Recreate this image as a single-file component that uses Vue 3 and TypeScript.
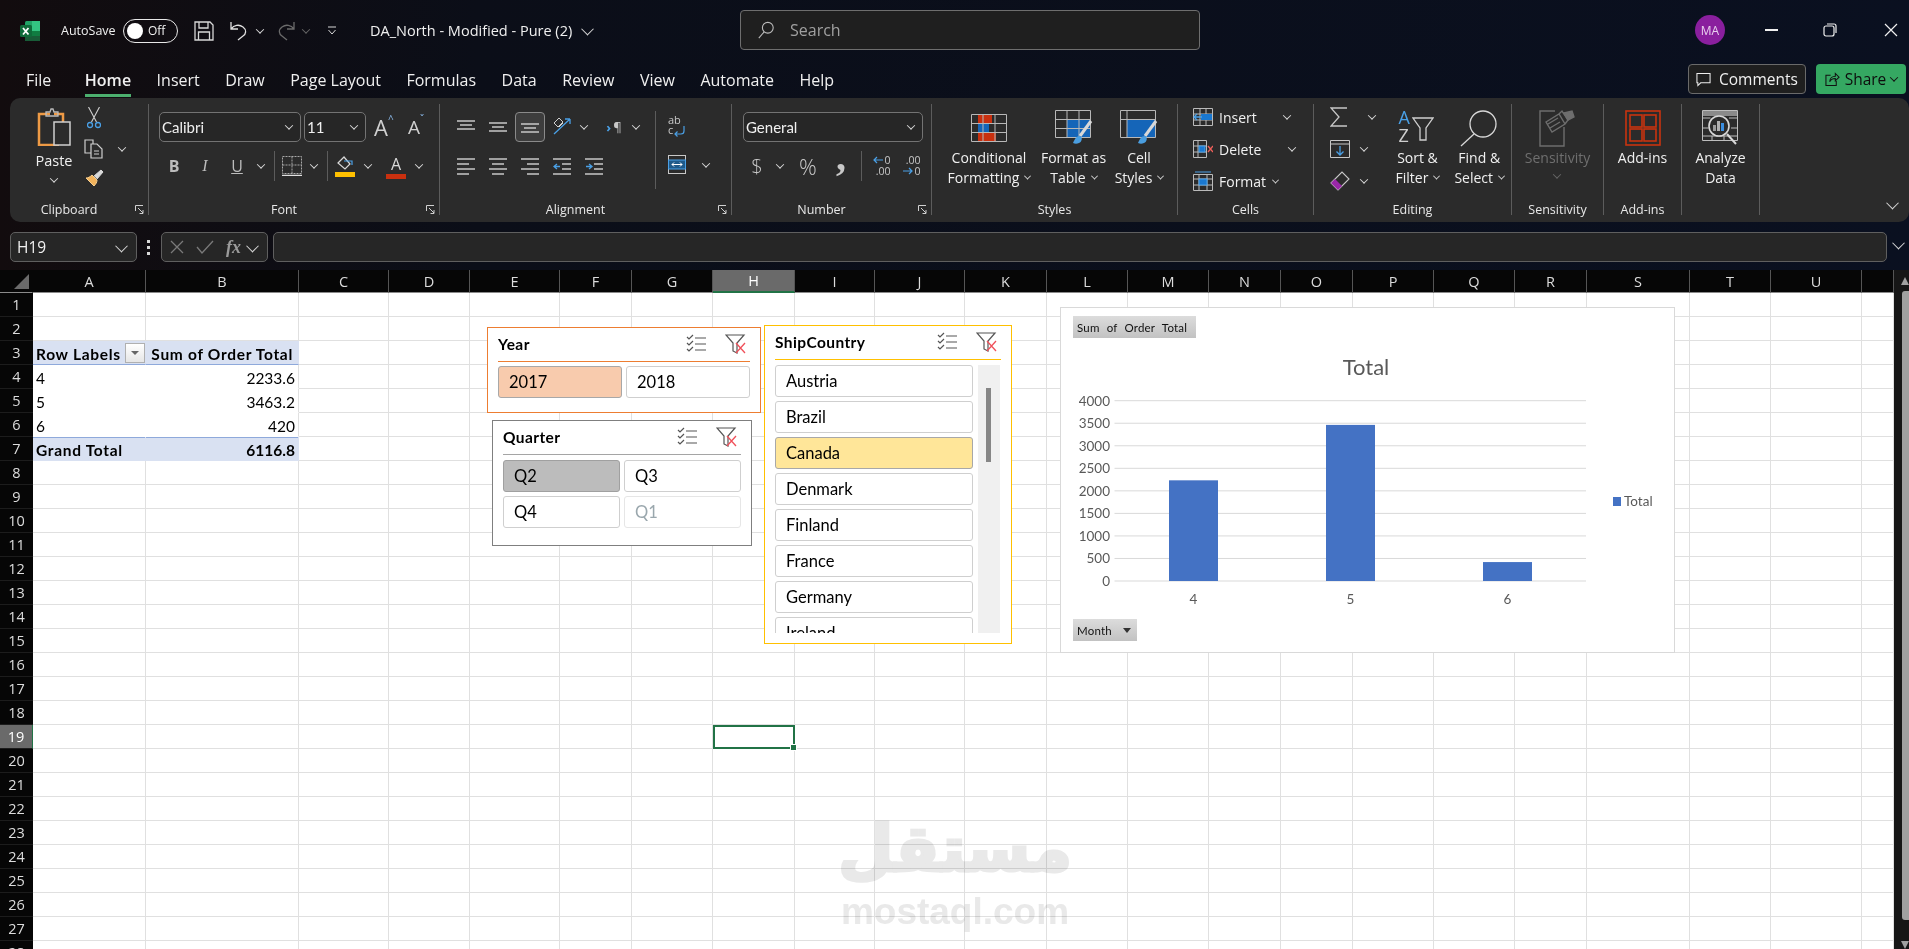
<template>
  <div class="app">
    <!-- title bar -->
    <header class="titlebar">
      <svg class="xl-logo" viewBox="0 0 20 20" width="20" height="20">
        <rect x="5" y="0" width="15" height="20" rx="1.5" fill="#21a366" />
        <rect x="12" y="0" width="8" height="10" fill="#33c481" />
        <rect x="5" y="10" width="15" height="5" fill="#107c41" />
        <rect x="5" y="15" width="15" height="5" fill="#185c37" />
        <rect x="0" y="4" width="12" height="12" rx="1.5" fill="#0f6a39" />
        <path d="M3 7l5.5 6.5M8.5 7L3 13.500" stroke="#fff" stroke-width="1.800" fill="none" />
      </svg>
      <span class="autosave">AutoSave</span>
      <span class="toggle"><i></i>Off</span>
      <svg class="qa save" viewBox="0 0 20 20" width="20" height="20" fill="none" stroke="#d8d8d8" stroke-width="1.300">
        <path d="M1 1h15l3 3v15H1zM5 1v6h9V1M4.500 19v-8h11v8" />
      </svg>
      <svg class="qa undo" viewBox="0 0 18 20" width="18" height="20" fill="none" stroke="#e0e0e0" stroke-width="1.300">
        <path d="M1 1v7h7M1 8c3-4 8-5 12-2 4 3 3 7 0 9l-5 4" />
      </svg>
      <i class="chev undo-chev"></i>
      <svg class="qa redo" viewBox="0 0 18 20" width="18" height="20" fill="none" stroke="#6b6b6b" stroke-width="1.300">
        <path d="M17 1v7h-7M17 8c-3-4-8-5-12-2-4 3-3 7 0 9l5 4" />
      </svg>
      <i class="chev dim redo-chev"></i>
      <svg class="qa custom" viewBox="0 0 10 10" width="10" height="10" fill="none" stroke="#d8d8d8" stroke-width="1">
        <path d="M1 1h8M1.500 4l3.500 4 3.500-4" />
      </svg>
      <span class="doc">DA_North - Modified - Pure (2)</span>
      <i class="chev big doc-chev"></i>
      <div class="search">
        <svg viewBox="0 0 20 20" width="18" height="20" fill="none" stroke="#bdbdbd" stroke-width="1.200">
          <circle cx="12" cy="7.500" r="6" />
          <path d="M8 12l-6 7" />
        </svg>
        <span>Search</span>
      </div>
      <div class="avatar">MA</div>
      <span class="win min"></span>
      <svg class="win-restore" viewBox="0 0 14 14" width="14" height="14" fill="none" stroke="#f0f0f0" stroke-width="1.200">
        <rect x="1" y="3" width="10" height="10" rx="2" />
        <path d="M4 1h7a2 2 0 0 1 2 2v7" />
      </svg>
      <svg class="win-close" viewBox="0 0 14 14" width="14" height="14" fill="none" stroke="#f0f0f0" stroke-width="1.200">
        <path d="M1 1l12 12M13 1L1 13" />
      </svg>
    </header>

    <!-- tabs -->
    <nav class="tabbar">
      <span v-for="t in tabs" :key="t" class="tab" :class="{ active: t === 'Home' }">{{ t }}</span>
      <div class="tab-actions">
        <button class="comments">
          <svg viewBox="0 0 16 16" width="15" height="15" fill="none" stroke="#eee" stroke-width="1.100">
            <path d="M1 1.500h14v10H5l-3 3v-3H1z" />
          </svg>
          Comments
        </button>
        <button class="share">
          <svg viewBox="0 0 16 16" width="15" height="16" fill="none" stroke="#111" stroke-width="1.100">
            <path d="M6 4H1v11h11v-5M5 11c0-4 3-6 6-6V2l4 4-4 4V7.500c-3 0-5 1-6 3.500z" />
          </svg>
          Share
          <i class="chev dark"></i>
        </button>
      </div>
    </nav>

    <!-- ribbon -->
    <section class="ribbon">
      <div class="group clipboard">
        <div class="body clip-body">
          <div class="paste">
            <svg viewBox="0 0 34 38" width="34" height="38" fill="none">
              <path d="M13 6H2v31h20" stroke="#ee9a45" stroke-width="2.500" />
              <path d="M17 6h9v8" stroke="#ee9a45" stroke-width="2.500" />
              <path d="M9 8V4h4l1-3 2 0 1 3h4v4z" stroke="#bdbdbd" stroke-width="1.300" />
              <rect x="17" y="14" width="16" height="23" stroke="#d0d0d0" stroke-width="1.500" fill="#2b2b2b" />
            </svg>
            <span class="paste-text">Paste</span>
            <i class="chev"></i>
          </div>
          <div class="clip-small">
            <svg viewBox="0 0 14 22" width="14" height="22" fill="none">
              <path d="M1.500 0l8 15M12.500 0l-8 15" stroke="#d0d0d0" stroke-width="1.100" />
              <circle cx="3" cy="18" r="2.500" stroke="#4aa0e6" stroke-width="1.300" />
              <circle cx="11" cy="18" r="2.500" stroke="#4aa0e6" stroke-width="1.300" />
            </svg>
            <div class="copy-row">
              <svg viewBox="0 0 20 20" width="20" height="20" fill="none" stroke="#cfcfcf" stroke-width="1.200">
                <path d="M7 14H1V1h8v4M7 5h6l5 5v9H7zM10 12h5M10 15h5" />
              </svg>
              <i class="chev"></i>
            </div>
            <svg viewBox="0 0 20 20" width="20" height="20" fill="none">
              <path d="M2 9l8 8c2-2 3-4 3-6l-5-5C6 8 4 9 2 9z" fill="#f2b35c" stroke="#f7cf8e" stroke-width="1" />
              <path d="M10 7l7-6 2 2-6 7" fill="#d9d9d9" stroke="#d9d9d9" />
            </svg>
          </div>
        </div>
        <div class="foot launch">Clipboard</div>
        <svg class="launcher" viewBox="0 0 9 10" width="9" height="10" fill="none" stroke="#d0d0d0">
          <path d="M.5 6V.5H8M3 3l5 5M8 5v3.500H4.500" />
        </svg>
      </div>

      <div class="group font">
        <div class="body">
          <div class="inputs">
            <div class="input font-name">Calibri<i class="chev"></i></div>
            <div class="input font-size">11<i class="chev"></i></div>
            <span class="grow">A<sup>^</sup></span>
            <span class="shrink">A<sup>ˇ</sup></span>
          </div>
          <div class="font-row">
            <b class="fmt">B</b>
            <em class="fmt serif">I</em>
            <u class="fmt">U</u>
            <i class="chev"></i>
            <span class="vsep"></span>
            <svg viewBox="0 0 20 20" width="20" height="20" fill="none" stroke="#a8a8a8" stroke-dasharray="2 1">
              <path d="M.5.500h19v17H.5zM10 .500v17M.5 9h19" />
              <path d="M0 19.500h20" stroke="#e0e0e0" stroke-width="1.500" stroke-dasharray="none" />
            </svg>
            <i class="chev"></i>
            <span class="vsep"></span>
            <svg viewBox="0 0 20 22" width="20" height="22" fill="none">
              <path d="M3 8l6-6 6 7-5 5z" stroke="#d8d8d8" stroke-width="1.200" />
              <path d="M9 6l8 0v4" stroke="#4aa0e6" stroke-width="1.200" />
              <rect x="0" y="17" width="20" height="5" fill="#ffc000" />
            </svg>
            <i class="chev"></i>
            <span class="color-a">A</span>
            <i class="chev"></i>
          </div>
        </div>
        <div class="foot launch">Font</div>
        <svg class="launcher" viewBox="0 0 9 10" width="9" height="10" fill="none" stroke="#d0d0d0">
          <path d="M.5 6V.5H8M3 3l5 5M8 5v3.500H4.500" />
        </svg>
      </div>

      <div class="group alignment">
        <div class="body align-body">
          <div class="align-left">
            <div class="align-row">
              <svg class="al" viewBox="0 0 18 14" width="18" height="14"><path d="M0 1h18M3 5h12M0 9h18" /></svg>
              <svg class="al" viewBox="0 0 18 14" width="18" height="14"><path d="M0 3h18M3 7h12M0 11h18" /></svg>
              <span class="al-on">
                <svg class="al" viewBox="0 0 18 14" width="18" height="14"><path d="M0 4h18M3 8h12M0 12h18" /></svg>
              </span>
              <svg viewBox="0 0 20 22" width="20" height="22" fill="none">
                <path d="M2 18L18 3M18 3h-5M18 3v5" stroke="#4aa0e6" stroke-width="1.300" />
                <path d="M2 7l5-5 4 4-5 5zM7 11l4-4" stroke="#d0d0d0" stroke-width="1" />
              </svg>
              <i class="chev"></i>
              <span class="para"><b>›</b>¶</span>
              <i class="chev para-chev"></i>
            </div>
            <div class="align-row second">
              <svg class="al" viewBox="0 0 18 18" width="18" height="18"><path d="M0 2h18M0 7h12M0 12h18M0 17h12" /></svg>
              <svg class="al" viewBox="0 0 18 18" width="18" height="18"><path d="M0 2h18M3 7h12M0 12h18M3 17h12" /></svg>
              <svg class="al" viewBox="0 0 18 18" width="18" height="18"><path d="M0 2h18M6 7h12M0 12h18M6 17h12" /></svg>
              <svg class="al" viewBox="0 0 18 18" width="18" height="18">
                <path d="M0 2h18M9 7h9M9 12h9M0 17h18" />
                <path class="blue" d="M7 9.500H1M4 7L1 9.500 4 12" />
              </svg>
              <svg class="al" viewBox="0 0 18 18" width="18" height="18">
                <path d="M0 2h18M9 7h9M9 12h9M0 17h18" />
                <path class="blue" d="M1 9.500h6M4 7l3 2.500L4 12" />
              </svg>
            </div>
          </div>
          <span class="vsep tall"></span>
          <div class="align-right">
            <div class="wrap-ic">
              <span>ab</span>
              <span class="wrap-c">c
                <svg viewBox="0 0 12 12" width="12" height="12" fill="none" stroke="#4aa0e6" stroke-width="1.200">
                  <path d="M11 1v5a3 3 0 0 1-3 3H2M4.500 6.500L2 9l2.500 2.500" />
                </svg>
              </span>
            </div>
            <div class="merge-row">
              <svg viewBox="0 0 18 19" width="18" height="19" fill="none" stroke="#c8c8c8">
                <rect x=".5" y=".5" width="17" height="18" />
                <rect x=".5" y="5" width="17" height="9" fill="#1f5a8a" stroke="#4aa0e6" />
                <path d="M4 9.500h10M6 7.500l-2 2 2 2M12 7.500l2 2-2 2" stroke="#fff" />
              </svg>
              <i class="chev"></i>
            </div>
          </div>
        </div>
        <div class="foot launch">Alignment</div>
        <svg class="launcher" viewBox="0 0 9 10" width="9" height="10" fill="none" stroke="#d0d0d0">
          <path d="M.5 6V.5H8M3 3l5 5M8 5v3.500H4.500" />
        </svg>
      </div>

      <div class="group number">
        <div class="body num-body">
          <div class="input num-format">General<i class="chev"></i></div>
          <div class="num-row">
            <span class="sym">$</span>
            <i class="chev"></i>
            <span class="sym pct">%</span>
            <b class="sym comma">,</b>
            <span class="vsep"></span>
            <span class="dec">
              <span>
                <svg viewBox="0 0 10 8" width="10" height="8" fill="none" stroke="#4aa0e6" stroke-width="1.200">
                  <path d="M10 4H1M4 1L1 4l3 3" />
                </svg>0
              </span>
              <span>.00</span>
            </span>
            <span class="dec">
              <span>.00</span>
              <span>
                <svg viewBox="0 0 10 8" width="10" height="8" fill="none" stroke="#4aa0e6" stroke-width="1.200">
                  <path d="M0 4h9M6 1l3 3-3 3" />
                </svg>0
              </span>
            </span>
          </div>
        </div>
        <div class="foot launch">Number</div>
        <svg class="launcher" viewBox="0 0 9 10" width="9" height="10" fill="none" stroke="#d0d0d0">
          <path d="M.5 6V.5H8M3 3l5 5M8 5v3.500H4.500" />
        </svg>
      </div>

      <div class="group styles">
        <div class="body large-row">
          <div class="large w-cond">
            <svg viewBox="0 0 36 28" width="36" height="28" fill="none">
              <rect x="7" y=".5" width="14" height="9" fill="#c9300f" />
              <rect x="7" y="10" width="11" height="8" fill="#1565b8" />
              <rect x="7" y="18.500" width="18" height="9" fill="#c9300f" />
              <path d="M.5.500h35v27H.5zM12 .5v27M24 .5v27M.5 9.500h35M.5 18.500h35" stroke="#b8b8b8" />
            </svg>
            <span>Conditional</span>
            <span>Formatting<i class="chev tiny"></i></span>
          </div>
          <div class="large w-fmt">
            <svg viewBox="0 0 38 36" width="38" height="36" fill="none">
              <rect x="12" y="10" width="23" height="18" fill="#1565b8" />
              <path d="M.5.500h35v27H.5zM12 .5v27M24 .5v27M.5 9.500h35M.5 18.500h35" stroke="#b8b8b8" />
              <path d="M36 11L25 26" stroke="#d8d8d8" stroke-width="3" />
              <path d="M18 33c2-4 3-7 7-7 3 1 2 6-1 7-2 1-4 1-6 0z" fill="#4a9ee0" />
            </svg>
            <span>Format as</span>
            <span>Table<i class="chev tiny"></i></span>
          </div>
          <div class="large w-cell">
            <svg viewBox="0 0 38 36" width="38" height="36" fill="none">
              <rect x="7" y="9" width="28" height="19" fill="#1565b8" />
              <path d="M.5.500h35v27H.5zM.5 9.500h35M7 .5v27" stroke="#b8b8b8" />
              <path d="M36 11L25 26" stroke="#d8d8d8" stroke-width="3" />
              <path d="M18 33c2-4 3-7 7-7 3 1 2 6-1 7-2 1-4 1-6 0z" fill="#4a9ee0" />
            </svg>
            <span>Cell</span>
            <span>Styles<i class="chev tiny"></i></span>
          </div>
        </div>
        <div class="foot">Styles</div>
      </div>

      <div class="group cells">
        <div class="body stack">
          <div class="stack-row">
            <svg viewBox="0 0 20 18" width="20" height="18" fill="none" stroke="#bbb">
              <path d="M.5.500h19v17H.5zM.5 6h19M.5 12h19M7 .5v17M13 .5v17" />
              <rect x="8" y="6" width="11" height="6" fill="#1a78d0" stroke="none" />
              <path d="M1 9h8M4 6L1 9l3 3" stroke="#4aa0e6" stroke-width="1.300" />
            </svg>
            <span>Insert</span><i class="chev c-ins"></i>
          </div>
          <div class="stack-row">
            <svg viewBox="0 0 20 18" width="20" height="18" fill="none" stroke="#bbb">
              <path d="M.5.500h13v17H.5zM.5 6h13M.5 12h13M5 .5v17" />
              <rect x="6" y="6" width="6" height="6" fill="#1a78d0" stroke="#4aa0e6" />
              <path d="M15 6l5 6M20 6l-5 6" stroke="#f0605a" stroke-width="1.300" />
            </svg>
            <span>Delete</span><i class="chev c-del"></i>
          </div>
          <div class="stack-row">
            <svg viewBox="0 0 20 20" width="20" height="20" fill="none" stroke="#bbb">
              <path d="M.5 3.500h19v16H.5zM.5 8h19M.5 14h19M6 3.500v16M14 3.500v16" />
              <rect x="6" y="8" width="8" height="6" fill="#1a78d0" stroke="#4aa0e6" />
              <path d="M2 1h16" stroke="#4aa0e6" />
            </svg>
            <span>Format</span><i class="chev tiny c-fmt"></i>
          </div>
        </div>
        <div class="foot">Cells</div>
      </div>

      <div class="group editing">
        <div class="body large-row">
          <div class="stack edit-stack">
            <div class="stack-row">
              <svg viewBox="0 0 18 20" width="18" height="20" fill="none" stroke="#c8c8c8" stroke-width="1.300">
                <path d="M17 1H1l8 9-8 9h16" />
              </svg>
              <i class="chev e-sum"></i>
            </div>
            <div class="stack-row">
              <svg viewBox="0 0 20 18" width="20" height="18" fill="none">
                <path d="M.5.500h19v17H.5zM.5 4h19" stroke="#c8c8c8" />
                <path d="M10 6v9M6.500 11.500L10 15l3.500-3.500" stroke="#4aa0e6" stroke-width="1.300" />
              </svg>
              <i class="chev e-fill"></i>
            </div>
            <div class="stack-row">
              <svg viewBox="0 0 20 20" width="20" height="20" fill="none">
                <path d="M1 12L12 1l7 7L8 19z" stroke="#c8c8c8" stroke-width="1.100" />
                <path d="M1 12l4-4 7 7-4 4z" fill="#9a27a8" />
              </svg>
              <i class="chev e-fill"></i>
            </div>
          </div>
          <div class="large w-sort">
            <div class="sort-ic">
              <span class="az"><b>A</b><span>Z</span></span>
              <svg viewBox="0 0 22 24" width="22" height="24" fill="none">
                <path d="M1 1h20l-7 10v12H8V11z" stroke="#cfcfcf" stroke-width="1.300" />
              </svg>
            </div>
            <span>Sort &amp;</span>
            <span>Filter<i class="chev tiny"></i></span>
          </div>
          <div class="large w-find">
            <svg viewBox="0 0 38 36" width="38" height="36" fill="none" stroke="#d8d8d8" stroke-width="1.300">
              <circle cx="23" cy="14" r="13" />
              <path d="M14 24L1 36" />
            </svg>
            <span>Find &amp;</span>
            <span>Select<i class="chev tiny"></i></span>
          </div>
        </div>
        <div class="foot">Editing</div>
      </div>

      <div class="group sens">
        <div class="body large-row center">
          <div class="large off">
            <svg viewBox="0 0 36 36" width="36" height="36" fill="none" stroke="#6e6e6e" stroke-width="1.400">
              <path d="M16 1H1v35h24V17" />
              <path d="M7 12L20 4l6 10-13 8zM20 4l3-3 6 9-3 4M9 14l10-6M11 18l10-6" />
              <path d="M25 3l8-2 2 6-6 3z" fill="#6e6e6e" />
            </svg>
            <span>Sensitivity</span>
            <i class="chev dim"></i>
          </div>
        </div>
        <div class="foot">Sensitivity</div>
      </div>

      <div class="group addins">
        <div class="body large-row center">
          <div class="large">
            <svg viewBox="0 0 36 36" width="36" height="36" fill="none" stroke="#c9340f" stroke-width="1.600">
              <rect x="1" y="1" width="34" height="34" />
              <rect x="5" y="5" width="12" height="12" />
              <rect x="19" y="5" width="12" height="12" />
              <rect x="5" y="19" width="12" height="12" />
              <rect x="19" y="19" width="12" height="12" />
            </svg>
            <span>Add-ins</span>
          </div>
        </div>
        <div class="foot">Add-ins</div>
      </div>

      <div class="group analyze">
        <div class="body large-row center">
          <div class="large">
            <svg viewBox="0 0 36 36" width="36" height="36" fill="none" stroke="#bdbdbd">
              <path d="M.5.500h35v30H.5zM.5 8h8M27 8h8M.5 18h6M29 18h6M.5 26h35M10 26v5M22 26v5" />
              <rect x="1" y="1" width="34" height="5" fill="#8a8a8a" stroke="none" />
              <circle cx="17" cy="16" r="10" stroke="#d8d8d8" stroke-width="1.600" fill="#2b2b2b" />
              <path d="M25 24l9 10" stroke="#d8d8d8" stroke-width="2" />
              <rect x="11" y="15" width="3" height="6" fill="#9a9a9a" stroke="none" />
              <rect x="15" y="11" width="3" height="10" fill="#b0b0b0" stroke="none" />
              <rect x="19" y="13" width="3" height="8" fill="#3a8ee0" stroke="none" />
            </svg>
            <span>Analyze</span>
            <span>Data</span>
          </div>
        </div>
        <div class="foot"></div>
      </div>
      <i class="chev big ribbon-collapse"></i>
    </section>

    <!-- formula bar -->
    <div class="formula">
      <div class="namebox">H19<i class="chev big"></i></div>
      <span class="dots"><i></i><i></i><i></i></span>
      <div class="fx">
        <svg viewBox="0 0 14 14" width="14" height="14" fill="none" stroke="#7a7a7a" stroke-width="1.300">
          <path d="M1 1l12 12M13 1L1 13" />
        </svg>
        <svg viewBox="0 0 18 14" width="18" height="14" fill="none" stroke="#7a7a7a" stroke-width="1.300">
          <path d="M1 7l5 6L17 1" />
        </svg>
        <em>fx</em>
        <i class="chev big"></i>
      </div>
      <div class="fbar"></div>
      <i class="chev big f-chev"></i>
    </div>

    <!-- sheet -->
    <div class="sheet">
      <div class="grid" :style="{ gridTemplateColumns: gridCols }">
        <div class="corner"><span></span></div>
        <div
          v-for="c in cols"
          :key="c.name"
          class="col-head"
          :class="{ sel: c.name === 'H' }"
        >{{ c.name === 'V' ? '' : c.name }}</div>
        <template v-for="r in rows" :key="r">
          <div class="row-head" :class="{ sel: r === 19 }">{{ r }}</div>
          <div
            v-for="c in cols"
            :key="c.name + r"
            class="cell"
            :class="cellClass(c.name, r)"
          >
            <span>{{ cells[c.name + r]?.text }}</span>
            <span v-if="c.name + r === 'A3'" class="pv-filter"><i></i></span>
          </div>
        </template>

        <div class="selection"><i></i></div>

        <div
          v-for="s in slicers"
          :key="s.title"
          class="slicer"
          :class="s.cls"
        >
          <div class="sl-head">
            <b>{{ s.title }}</b>
            <svg viewBox="0 0 20 19" width="20" height="19" fill="none" stroke="#555" stroke-width="1.200">
              <path d="M1 3l2 2 4-4M1 9l2 2 4-4M1 15l2 2 4-4M9 4h11M9 10h11M9 16h11" />
            </svg>
            <svg viewBox="0 0 21 20" width="21" height="20" fill="none">
              <path d="M1 1h18l-7 8v10l-4-2V9z" stroke="#555" stroke-width="1.200" />
              <path d="M11 9l9 10M20 9l-9 10" stroke="#f0505a" stroke-width="1.300" />
            </svg>
          </div>
          <div class="sl-body">
            <div class="sl-items">
              <div
                v-for="it in s.items"
                :key="it"
                class="sl-item"
                :class="{ on: it === s.selected, off: s.dimmed === it }"
              >{{ it }}</div>
            </div>
            <div v-if="s.scroll" class="sl-track"><i></i></div>
          </div>
        </div>

        <div class="chart">
          <svg viewBox="0 0 614 345" width="614" height="345">
            <text x="306" y="68" class="c-title" text-anchor="middle">Total</text>
            <g v-for="v in ticks" :key="v">
              <line x1="54.500" x2="526" :y1="tickY(v)" :y2="tickY(v)" stroke="#d9d9d9" />
              <text x="50" :y="tickY(v) + 5" class="c-axis" text-anchor="end">{{ v }}</text>
            </g>
            <g v-for="b in bars" :key="b.label">
              <rect :x="b.x" :y="tickY(b.value)" width="49" :height="tickY(0) - tickY(b.value)" fill="#4472c4" />
              <text :x="b.x + 24.500" y="297" class="c-axis" text-anchor="middle">{{ b.label }}</text>
            </g>
            <rect x="553" y="190" width="8" height="9" fill="#4472c4" />
            <text x="564" y="199" class="c-axis">Total</text>
          </svg>
          <span class="field sum">Sum of Order Total</span>
          <span class="field month">Month<i></i></span>
        </div>

        <div class="watermark">
          <span class="wm-ar">مستقل</span>
          <span class="wm-en">mostaql.com</span>
        </div>
      </div>
      <div class="vscroll">
        <i class="up"></i>
        <i class="thumb"></i>
        <i class="down"></i>
      </div>
    </div>
  </div>
</template>

<script setup lang="ts">
interface Cell {
  text: string
  cls?: string
}

const tabs = ['File', 'Home', 'Insert', 'Draw', 'Page Layout', 'Formulas', 'Data', 'Review', 'View', 'Automate', 'Help']

const widths: Record<string, number> = {
  A: 113, B: 153, C: 90, D: 81, E: 90, F: 72, G: 81, H: 82, I: 80, J: 90, K: 82,
  L: 81, M: 81, N: 72, O: 72, P: 81, Q: 81, R: 72, S: 103, T: 81, U: 91, V: 32,
}
const cols = Object.keys(widths).map((name) => ({ name, width: widths[name] }))
const rows = Array.from({ length: 28 }, (_, i) => i + 1)
const gridCols = '33px ' + cols.map((c) => c.width + 'px').join(' ')

const cells: Record<string, Cell> = {
  A3: { text: 'Row Labels', cls: 'pv-head' },
  B3: { text: 'Sum of Order Total', cls: 'pv-head right' },
  A4: { text: '4', cls: 'pv' },
  B4: { text: '2233.6', cls: 'pv right' },
  A5: { text: '5', cls: 'pv' },
  B5: { text: '3463.2', cls: 'pv right' },
  A6: { text: '6', cls: 'pv' },
  B6: { text: '420', cls: 'pv right' },
  A7: { text: 'Grand Total', cls: 'pv-total' },
  B7: { text: '6116.8', cls: 'pv-total right' },
}

function cellClass(col: string, row: number) {
  return cells[col + row]?.cls ?? ''
}

const slicers = [
  { title: 'Year', cls: 'year', items: ['2017', '2018'], selected: '2017' },
  { title: 'Quarter', cls: 'quarter', items: ['Q2', 'Q3', 'Q4', 'Q1'], selected: 'Q2', dimmed: 'Q1' },
  {
    title: 'ShipCountry',
    cls: 'ship',
    items: ['Austria', 'Brazil', 'Canada', 'Denmark', 'Finland', 'France', 'Germany', 'Ireland'],
    selected: 'Canada',
    scroll: true,
  },
]

const ticks = [0, 500, 1000, 1500, 2000, 2500, 3000, 3500, 4000]
const tickY = (v: number) => 274 - (v / 4000) * 180.3
const bars = [
  { label: '4', value: 2233.6, x: 109 },
  { label: '5', value: 3463.2, x: 266 },
  { label: '6', value: 420, x: 423 },
]
</script>

<style>
html,
body {
  margin: 0;
  background: #0a0f1b;
}
</style>

<style scoped>
.app {
  width: 1909px;
  height: 949px;
  overflow: hidden;
  position: relative;
  background: linear-gradient(90deg, #120c0e 0%, #0b0e18 25%, #0a1020 100%);
  color: #f0f0f0;
  font-family: "Open Sans", "Noto Sans", sans-serif;
}
.chev {
  display: inline-block;
  width: 5px;
  height: 5px;
  border-right: 1.5px solid #d8d8d8;
  border-bottom: 1.5px solid #d8d8d8;
  transform: rotate(45deg) translate(-1px, -1px);
  flex: none;
}
.chev.big {
  width: 8px;
  height: 8px;
  border-width: 1.2px;
}
.chev.tiny {
  width: 4px;
  height: 4px;
  margin-left: 6px;
  border-width: 1.2px;
  vertical-align: 3px;
}
.chev.dim {
  border-color: #666;
}
.chev.dark {
  border-color: #111;
}

/* title bar */
.titlebar {
  height: 49px;
  display: flex;
  align-items: center;
  padding: 12px 0 0 20px;
  box-sizing: border-box;
  font-size: 13px;
}
.autosave {
  margin-left: 21px;
  width: 62px;
  font-size: 12.500px;
}
.toggle {
  width: 55px;
  height: 24px;
  box-sizing: border-box;
  border: 1px solid #e8e8e8;
  border-radius: 12px;
  display: flex;
  align-items: center;
  font-size: 12px;
  gap: 5px;
  padding-left: 3px;
}
.toggle i {
  width: 16px;
  height: 16px;
  border-radius: 50%;
  background: #fff;
}
.qa.save {
  margin-left: 16px;
}
.qa.undo {
  margin-left: 16px;
}
.undo-chev {
  margin-left: 9px;
}
.qa.redo {
  margin-left: 14px;
}
.redo-chev {
  margin-left: 8px;
}
.qa.custom {
  margin-left: 18px;
}
.doc {
  margin-left: 33px;
  font-size: 14.500px;
  width: 207px;
  white-space: nowrap;
}
.doc-chev {
  margin-left: 6px;
}
.search {
  position: absolute;
  left: 740px;
  top: 10px;
  width: 460px;
  height: 40px;
  box-sizing: border-box;
  background: #1f1f1f;
  border: 1px solid #6e6e6e;
  border-radius: 4px;
  display: flex;
  align-items: center;
  gap: 15px;
  padding-left: 16px;
  font-size: 16px;
  color: #a0a0a0;
}
.avatar {
  position: absolute;
  left: 1695px;
  top: 15px;
  width: 30px;
  height: 30px;
  border-radius: 50%;
  background: #8a1f9e;
  display: flex;
  align-items: center;
  justify-content: center;
  font-size: 12px;
  color: #e8d0ee;
}
.win.min {
  position: absolute;
  left: 1765px;
  top: 29px;
  width: 13px;
  height: 1.500px;
  background: #f0f0f0;
}
.win-restore {
  position: absolute;
  left: 1823px;
  top: 23px;
}
.win-close {
  position: absolute;
  left: 1884px;
  top: 23px;
}

/* tabs */
.tabbar {
  height: 49px;
  display: flex;
  align-items: center;
  gap: 25.500px;
  padding: 13px 0 0 26px;
  box-sizing: border-box;
  font-size: 16px;
}
.tab {
  position: relative;
  white-space: nowrap;
}
.tab.active {
  font-weight: 600;
  margin-left: 8px;
}
.tab.active::after {
  content: "";
  position: absolute;
  left: 0;
  right: 0;
  top: 25px;
  height: 3px;
  background: #4caf6e;
}
.tab-actions {
  position: absolute;
  right: 3px;
  top: 64px;
  display: flex;
  gap: 10px;
}
.comments,
.share {
  height: 30px;
  box-sizing: border-box;
  border-radius: 4px;
  display: flex;
  align-items: center;
  font: inherit;
  font-size: 15.500px;
  padding: 0;
}
.comments {
  width: 118px;
  gap: 8px;
  justify-content: center;
  background: #1f1f1f;
  border: 1px solid #6a6a6a;
  color: #f0f0f0;
}
.share {
  width: 90px;
  gap: 5px;
  justify-content: center;
  background: #35a862;
  border: none;
  color: #0d0d0d;
}

/* ribbon */
.ribbon {
  position: relative;
  margin-left: 10px;
  width: 1899px;
  height: 124px;
  box-sizing: border-box;
  padding-top: 6px;
  background: #2b2b2b;
  border-radius: 10px;
  display: flex;
  font-size: 14px;
  color: #f0f0f0;
}
.group {
  position: relative;
  height: 111px;
  box-sizing: border-box;
  border-right: 1px solid #5c5c5c;
  flex: none;
}
.clipboard { width: 139px; }
.font { width: 291px; }
.alignment { width: 292px; }
.number { width: 200px; }
.styles { width: 246px; }
.cells { width: 136px; }
.editing { width: 198px; }
.sens { width: 92px; }
.addins { width: 78px; }
.analyze { width: 78px; }
.body {
  height: 98px;
  box-sizing: border-box;
}
.foot {
  height: 13px;
  line-height: 16px;
  text-align: center;
  font-size: 12.500px;
  color: #e8e8e8;
}
.foot.launch {
  padding-right: 20px;
}
.launcher {
  position: absolute;
  right: 4px;
  bottom: 0;
}
.vsep {
  display: block;
  width: 1px;
  height: 30px;
  background: #5c5c5c;
}

/* clipboard */
.clip-body {
  display: flex;
  padding: 4px 0 0 27px;
}
.paste {
  width: 34px;
  display: flex;
  flex-direction: column;
  align-items: center;
}
.paste-text {
  margin-top: 6px;
  line-height: 18px;
  font-size: 14.500px;
}
.paste .chev {
  margin-top: 7px;
}
.clip-small {
  margin-left: 13px;
  display: flex;
  flex-direction: column;
  gap: 10px;
  align-items: flex-start;
}
.clip-small > svg:first-child {
  margin-left: 3px;
  margin-top: -1px;
}
.copy-row {
  display: flex;
  align-items: center;
  gap: 15px;
}

/* font group */
.inputs {
  display: flex;
  align-items: center;
  padding: 8px 0 0 10px;
}
.input {
  height: 30px;
  box-sizing: border-box;
  border: 1px solid #737373;
  border-radius: 5px;
  background: #262626;
  display: flex;
  align-items: center;
  justify-content: space-between;
  padding: 0 8px 0 2px;
  font-family: "Lato", "Open Sans", sans-serif;
  font-size: 15px;
}
.font-name { width: 142px; }
.font-size { width: 62px; margin-left: 3px; }
.grow,
.shrink {
  font-size: 22px;
  line-height: 30px;
  color: #d0d0d0;
  display: flex;
}
.grow { margin-left: 8px; width: 34px; }
.shrink { font-size: 19px; }
.grow sup,
.shrink sup {
  font-size: 10px;
  line-height: 14px;
  color: #8ab8e8;
}
.font-row {
  display: grid;
  grid-template-columns: 30px 32px 32px 16px 10px 26px 18px 9px 26px 20px 36px 10px;
  justify-items: center;
  align-items: center;
  margin: 9px 0 0 10px;
  height: 30px;
}
.fmt {
  font-size: 16px;
  color: #bcbcbc;
}
.serif {
  font-family: "Liberation Serif", serif;
}
.color-a {
  font-size: 16px;
  line-height: 20px;
  width: 20px;
  text-align: center;
  color: #d8d8d8;
  border-bottom: 5px solid #c9300f;
}

/* alignment */
.align-body {
  display: flex;
}
.al {
  fill: none;
  stroke: #c8c8c8;
  stroke-width: 1.300;
}
.al .blue {
  stroke: #4aa0e6;
}
.align-left {
  width: 215px;
  padding-top: 8px;
}
.align-row {
  display: grid;
  grid-template-columns: 32px 32px 32px 32px 11px 50px 16px;
  justify-items: center;
  align-items: center;
  margin-left: 10px;
  height: 30px;
}
.para-chev {
  justify-self: start;
  margin-left: -6px;
}
.align-row.second {
  grid-template-columns: 32px 32px 32px 32px 32px;
  margin-top: 9px;
}
.al-on {
  width: 30px;
  height: 30px;
  box-sizing: border-box;
  border: 1px solid #8a8a8a;
  border-radius: 4px;
  background: #3d3d3d;
  display: flex;
  align-items: center;
  justify-content: center;
}
.para {
  font-size: 13px;
  color: #c8c8c8;
}
.para b {
  color: #4aa0e6;
  margin-right: 2px;
}
.vsep.tall {
  height: 78px;
  margin-top: 7px;
}
.align-right {
  padding: 11px 0 0 12px;
  display: flex;
  flex-direction: column;
  gap: 18px;
}
.wrap-ic {
  width: 22px;
  height: 22px;
  display: flex;
  flex-direction: column;
  font-size: 11px;
  line-height: 10px;
  color: #c8c8c8;
}
.wrap-c {
  display: flex;
  align-items: flex-start;
  gap: 0;
}
.merge-row {
  display: flex;
  align-items: center;
  gap: 17px;
}

/* number */
.num-body {
  padding-top: 8px;
}
.num-format {
  width: 180px;
  margin-left: 11px;
}
.num-row {
  display: grid;
  grid-template-columns: 28px 18px 38px 28px 12px 30px 30px;
  justify-items: center;
  align-items: center;
  margin: 9px 0 0 11px;
  height: 30px;
}
.sym {
  font-size: 20px;
  color: #c8c8c8;
  font-weight: 300;
}
.pct {
  font-size: 22px;
}
.comma {
  font-family: "Liberation Serif", serif;
  font-weight: 700;
  font-size: 40px;
  line-height: 14px;
  margin-top: -18px;
}
.dec {
  display: flex;
  flex-direction: column;
  align-items: flex-end;
  font-size: 10.500px;
  line-height: 11px;
  color: #c8c8c8;
}
.dec svg {
  margin-right: 1px;
}

/* large buttons */
.large-row {
  display: flex;
  padding-top: 4px;
}
.styles .large-row {
  padding-left: 8px;
}
.large-row.center {
  justify-content: center;
}
.large {
  display: flex;
  flex-direction: column;
  align-items: center;
  line-height: 20px;
  white-space: nowrap;
}
.large > svg {
  height: 40px;
  flex: none;
  align-self: center;
}
.off {
  color: #6f6f6f;
}
.off .chev {
  margin-top: 5px;
}
.w-cond { width: 98px; }
.w-fmt { width: 71px; }
.w-cell { width: 60px; }
.w-sort { width: 44px; margin-left: 4px; }
.w-find { width: 64px; margin-left: 8px; }

/* stacks in Cells and Editing */
.stack {
  display: flex;
  flex-direction: column;
}
.cells .stack {
  margin: -3px 0 3px;
  padding-left: 15px;
}
.stack-row {
  height: 32px;
  display: flex;
  align-items: center;
  gap: 6px;
}
.c-ins { margin-left: 21px; }
.c-del { margin-left: 22px; }
.chev.c-fmt { margin-left: 1px; }
.editing .large-row {
  padding-left: 16px;
}
.edit-stack {
  width: 62px;
  margin-top: -7px;
}
.e-sum { margin-left: 15px; }
.e-fill { margin-left: 5px; }
.sort-ic {
  width: 38px;
  height: 40px;
  display: flex;
  align-items: flex-start;
  gap: 2px;
}
.az {
  display: flex;
  flex-direction: column;
  font-size: 18px;
  line-height: 18px;
  color: #cfcfcf;
}
.az b {
  font-weight: 400;
  color: #4aa0e6;
}
.sort-ic svg {
  margin-top: 9px;
}
.ribbon-collapse {
  position: absolute;
  left: 1878px;
  top: 102px;
}

/* formula bar */
.formula {
  display: flex;
  align-items: center;
  height: 30px;
  margin-top: 10px;
  padding-left: 10px;
  position: relative;
}
.namebox {
  width: 127px;
  height: 30px;
  box-sizing: border-box;
  background: #262626;
  border: 1px solid #5f5f5f;
  border-radius: 5px;
  display: flex;
  align-items: center;
  justify-content: space-between;
  padding: 0 10px 0 6px;
  font-size: 15.500px;
}
.dots {
  display: flex;
  flex-direction: column;
  gap: 3px;
  margin-left: 10px;
}
.dots i {
  width: 3px;
  height: 3px;
  background: #d8d8d8;
}
.fx {
  margin-left: 11px;
  width: 107px;
  height: 30px;
  box-sizing: border-box;
  background: #262626;
  border: 1px solid #5f5f5f;
  border-radius: 5px;
  display: flex;
  align-items: center;
  padding-left: 8px;
  gap: 12px;
}
.fx em {
  font-family: "Liberation Serif", serif;
  font-weight: 700;
  font-size: 18px;
  color: #9a9a9a;
  margin-right: -5px;
}
.fbar {
  margin-left: 5px;
  width: 1614px;
  height: 30px;
  box-sizing: border-box;
  background: #262626;
  border: 1px solid #5f5f5f;
  border-radius: 5px;
}
.f-chev {
  position: absolute;
  left: 1894px;
  top: 8px;
}

/* sheet */
.sheet {
  position: absolute;
  left: 0;
  top: 270px;
  right: 0;
  bottom: 0;
  display: flex;
  overflow: hidden;
}
.grid {
  position: relative;
  width: 1894px;
  display: grid;
  grid-template-rows: 23px repeat(28, 24px);
  background: #fff;
  align-content: start;
}
.corner {
  background: #060606;
  border-right: 1px solid #060606;
  border-bottom: 1px solid #8a8a8a;
  display: flex;
  align-items: flex-end;
  justify-content: flex-end;
  padding: 0 3px 3px 0;
}
.corner span {
  width: 15px;
  height: 15px;
  background: #6a6a6a;
  clip-path: polygon(100% 0, 100% 100%, 0 100%);
}
.col-head,
.row-head {
  background: #060606;
  color: #dcdcdc;
  font-size: 14.500px;
  display: flex;
  align-items: center;
  justify-content: center;
  box-sizing: border-box;
}
.col-head {
  border-right: 1px solid #555;
  border-bottom: 1px solid #8a8a8a;
}
.col-head.sel,
.row-head.sel {
  background: #6a6a6a;
  color: #fff;
}
.col-head.sel {
  border-bottom: 2px solid #217346;
}
.row-head {
  border-bottom: 1px solid #1c1c1c;
}
.row-head.sel {
  border-right: 1px solid #217346;
}
.cell {
  box-sizing: border-box;
  border-right: 1px solid #e0e0e0;
  border-bottom: 1px solid #e0e0e0;
  color: #000;
  font-family: "Lato", "Carlito", sans-serif;
  font-size: 15.500px;
  display: flex;
  align-items: center;
  justify-content: space-between;
  padding: 2px 3px 0 3px;
  white-space: nowrap;
}
.cell.right {
  justify-content: flex-end;
}
.pv {
  border-bottom-color: transparent;
}
.pv:not(.right) {
  border-right-color: transparent;
}
.pv-head,
.pv-total {
  background: #d9e1f2;
  font-weight: 700;
  letter-spacing: 0.7px;
  border-right-color: #d9e1f2;
}
.pv-total.right {
  letter-spacing: 0;
}
.pv-head.right {
  padding-right: 5px;
}
.pv-head {
  border-bottom: 1px solid #8ea9db;
}
.pv-total {
  box-shadow: inset 0 1px 0 #8ea9db;
  border-bottom-color: #d9e1f2;
}
.pv-filter {
  width: 20px;
  height: 20px;
  box-sizing: border-box;
  border: 1px solid #b0b0b0;
  background: linear-gradient(#fff, #e6e6e6);
  display: flex;
  align-items: center;
  justify-content: center;
  margin: -2px -3px 0 0;
}
.pv-filter i {
  border-left: 4px solid transparent;
  border-right: 4px solid transparent;
  border-top: 4px solid #666;
}
.selection {
  position: absolute;
  left: 713px;
  top: 455px;
  width: 82px;
  height: 24px;
  box-sizing: border-box;
  border: 2px solid #217346;
}
.selection i {
  position: absolute;
  right: -4px;
  bottom: -4px;
  width: 5px;
  height: 5px;
  background: #217346;
  border: 1px solid #fff;
}

/* slicers */
.slicer {
  position: absolute;
  box-sizing: border-box;
  background: #fff;
  padding: 0 10px;
  color: #000;
  font-family: "Lato", "Carlito", sans-serif;
}
.sl-head {
  display: flex;
  align-items: center;
  gap: 19px;
  height: 34px;
  box-sizing: border-box;
  padding: 0 4px 2px 0;
  border-bottom: 1px solid;
  margin-bottom: 4px;
}
.sl-head b {
  flex: 1;
  font-size: 15.500px;
  letter-spacing: 0.4px;
}
.sl-items {
  display: grid;
  grid-template-columns: 1fr 1fr;
  gap: 4px;
}
.sl-item {
  height: 32px;
  box-sizing: border-box;
  border: 1px solid #cfcfcf;
  border-radius: 3px;
  display: flex;
  align-items: center;
  padding-left: 10px;
  font-size: 16.500px;
}
.sl-item.off {
  color: #9aa7ad;
  border-color: #e6e6e6;
}
.year {
  left: 487px;
  top: 57px;
  width: 274px;
  height: 86px;
  border: 1px solid #ed7d31;
}
.year .sl-head {
  border-color: #ed7d31;
}
.year .sl-item.on {
  background: #f8cbad;
  border-color: #a8a8a8;
}
.quarter {
  left: 492px;
  top: 150px;
  width: 260px;
  height: 126px;
  border: 1px solid #7f7f7f;
}
.quarter .sl-head {
  border-color: #a5a5a5;
  margin-bottom: 5px;
}
.quarter .sl-item.on {
  background: #bcbcbc;
  border-color: #a0a0a0;
}
.ship {
  left: 764px;
  top: 55px;
  width: 248px;
  height: 319px;
  border: 1px solid #ffc000;
}
.ship .sl-head {
  border-color: #ffc000;
  margin-bottom: 5px;
}
.ship .sl-body {
  display: flex;
  height: 268px;
  overflow: hidden;
}
.ship .sl-items {
  width: 198px;
  flex: none;
  grid-template-columns: 1fr;
  align-content: start;
}
.ship .sl-item.on {
  background: #ffe699;
  border-color: #a8a8a8;
}
.sl-track {
  margin-left: 5px;
  width: 22px;
  background: #f0f0f0;
  padding-top: 23px;
  box-sizing: border-box;
}
.sl-track i {
  display: block;
  margin-left: 8px;
  width: 5px;
  height: 74px;
  background: #868686;
}

/* chart */
.chart {
  position: absolute;
  left: 1060px;
  top: 37px;
  width: 615px;
  height: 346px;
  box-sizing: border-box;
  background: #fff;
  border: 1px solid #d9d9d9;
  font-family: "Lato", "Carlito", sans-serif;
}
.chart svg {
  display: block;
  margin: -1px 0 0 -1px;
}
.c-title {
  font-size: 22px;
  fill: #595959;
}
.c-axis {
  font-size: 13.500px;
  fill: #595959;
}
.field {
  position: absolute;
  left: 12px;
  height: 22px;
  box-sizing: border-box;
  padding-left: 4px;
  background: linear-gradient(#dcdcdc, #c2c2c2);
  color: #111;
  font-size: 11.500px;
  display: flex;
  align-items: center;
  white-space: nowrap;
  letter-spacing: 0.2px;
}
.sum {
  top: 8px;
  width: 123px;
  word-spacing: 4px;
}
.month {
  top: 311px;
  width: 64px;
}
.month i {
  margin-left: 11px;
  border-left: 4.500px solid transparent;
  border-right: 4.500px solid transparent;
  border-top: 5px solid #333;
}

/* watermark */
.watermark {
  position: absolute;
  left: 830px;
  top: 537px;
  width: 250px;
  display: flex;
  flex-direction: column;
  align-items: center;
  color: #e9e9e9;
  mix-blend-mode: multiply;
  pointer-events: none;
}
.wm-ar {
  font-family: "DejaVu Sans", sans-serif;
  font-weight: 700;
  font-size: 64px;
  line-height: 85px;
  -webkit-text-stroke: 3px #e9e9e9;
}
.wm-en {
  font-family: "Liberation Sans", sans-serif;
  font-weight: 700;
  font-size: 37px;
  line-height: 40px;
}

/* scrollbar */
.vscroll {
  width: 15px;
  background: #161616;
  position: relative;
  display: flex;
  flex-direction: column;
  align-items: flex-end;
}
.thumb {
  display: block;
  margin-top: 6px;
  width: 7px;
  height: 630px;
  border-radius: 3px 0 0 3px;
  background: #a0a0a0;
}
.up,
.down {
  display: block;
  width: 0;
  height: 0;
  border-left: 4px solid transparent;
  border-right: 4px solid transparent;
}
.up {
  margin-top: 7px;
  border-bottom: 8px solid #a0a0a0;
}
.down {
  margin-top: 21px;
  border-top: 8px solid #a0a0a0;
}
</style>
